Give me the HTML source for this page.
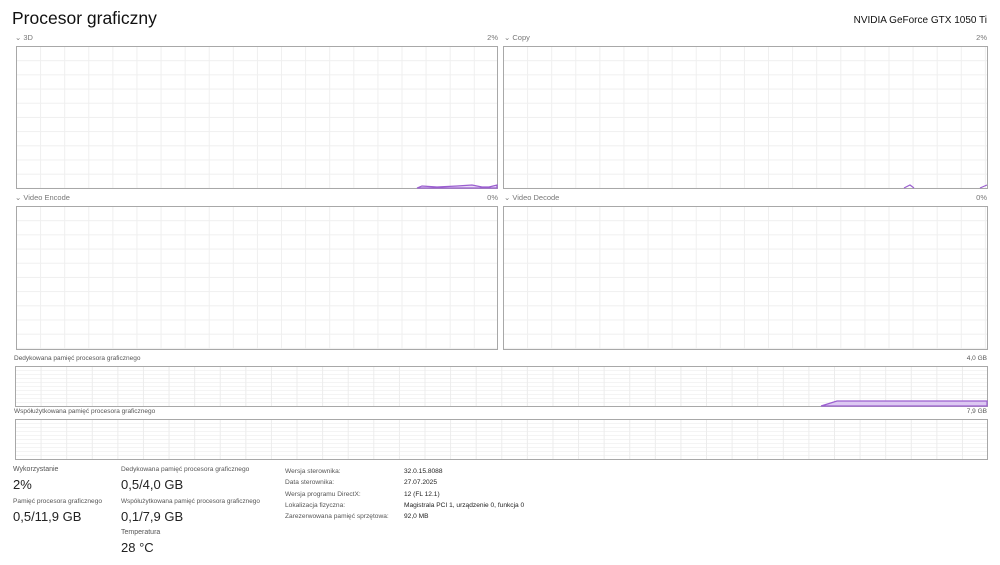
<!DOCTYPE html>
<html><head><meta charset="utf-8"><style>
body{margin:0;width:1000px;height:565px;background:#fff;font-family:"Liberation Sans",sans-serif;color:#222;position:relative;overflow:hidden}
.a{position:absolute;white-space:nowrap}
.g{position:absolute;border:1px solid #a8a8a8;box-sizing:border-box;
background-image:linear-gradient(to right,#efefef 1px,transparent 1px),linear-gradient(to bottom,#efefef 1px,transparent 1px);
background-size:24.1px 100%,100% 14.2px;background-position:-1px 0,0 -1px}
.m{background-image:linear-gradient(to right,#ececec 1px,transparent 1px),linear-gradient(to bottom,#f4f4f4 1px,transparent 1px);background-size:25.6px 100%,100% 4px}
.s{font-size:7.5px;color:#777}
.l{font-size:7px;color:#555}
.v{font-size:13px;color:#222}
.r{font-size:7px;color:#222}
svg{position:absolute;left:0;top:0}
</style></head><body>
<div class="a" style="left:12px;top:8px;font-size:17.5px;color:#111">Procesor graficzny</div>
<div class="a" style="right:13px;top:15px;font-size:10px;color:#111">NVIDIA GeForce GTX 1050 Ti</div>

<div class="a s" style="left:15px;top:33px">⌄ 3D</div>
<div class="a s" style="right:502px;top:33px">2%</div>
<div class="a s" style="left:504px;top:33px">⌄ Copy</div>
<div class="a s" style="right:13px;top:33px">2%</div>
<div class="g" style="left:16px;top:46px;width:482px;height:143px">
<svg width="482" height="143"><path d="M400 141 L405 139 L420 140 L440 139 L455 138 L465 140 L472 140 L480 138 L480 141 Z" fill="#eadcf6" stroke="#9b5fd0" stroke-width="1.2"/></svg></div>
<div class="g" style="left:503px;top:46px;width:485px;height:143px">
<svg width="485" height="143"><path d="M400 141 L406 138 L410 141 M476 141 L483 138" fill="none" stroke="#9b5fd0" stroke-width="1.2"/></svg></div>

<div class="a s" style="left:15px;top:193px">⌄ Video Encode</div>
<div class="a s" style="right:502px;top:193px">0%</div>
<div class="a s" style="left:504px;top:193px">⌄ Video Decode</div>
<div class="a s" style="right:13px;top:193px">0%</div>
<div class="g" style="left:16px;top:206px;width:482px;height:144px"></div>
<div class="g" style="left:503px;top:206px;width:485px;height:144px"></div>

<div class="a l" style="left:14px;top:355px;font-size:6.5px">Dedykowana pamięć procesora graficznego</div>
<div class="a l" style="right:13px;top:355px;font-size:6.5px">4,0 GB</div>
<div class="g m" style="left:15px;top:366px;width:973px;height:41px">
<svg width="973" height="41"><path d="M805 39 L821 34 L971 34 L971 39 Z" fill="#dcc8f2" stroke="#9b5fd0" stroke-width="1.2"/></svg></div>
<div class="a l" style="left:14px;top:408px;font-size:6.5px">Współużytkowana pamięć procesora graficznego</div>
<div class="a l" style="right:13px;top:408px;font-size:6.5px">7,9 GB</div>
<div class="g m" style="left:15px;top:419px;width:973px;height:41px"></div>

<div class="a l" style="left:13px;top:466px">Wykorzystanie</div>
<div class="a v" style="left:13px;top:477px">2%</div>
<div class="a l" style="left:13px;top:498px;font-size:6.6px">Pamięć procesora graficznego</div>
<div class="a v" style="left:13px;top:509px">0,5/11,9 GB</div>

<div class="a l" style="left:121px;top:466px;font-size:6.6px">Dedykowana pamięć procesora graficznego</div>
<div class="a v" style="left:121px;top:477px">0,5/4,0 GB</div>
<div class="a l" style="left:121px;top:498px;font-size:6.4px">Współużytkowana pamięć procesora graficznego</div>
<div class="a v" style="left:121px;top:509px">0,1/7,9 GB</div>
<div class="a l" style="left:121px;top:529px">Temperatura</div>
<div class="a v" style="left:121px;top:540px">28 °C</div>

<div class="a l" style="left:285px;top:466px;line-height:11.3px;font-size:6.6px">Wersja sterownika:<br>Data sterownika:<br>Wersja programu DirectX:<br>Lokalizacja fizyczna:<br>Zarezerwowana pamięć sprzętowa:</div>
<div class="a r" style="left:404px;top:466px;line-height:11.3px;font-size:6.6px">32.0.15.8088<br>27.07.2025<br>12 (FL 12.1)<br>Magistrala PCI 1, urządzenie 0, funkcja 0<br>92,0 MB</div>
</body></html>
